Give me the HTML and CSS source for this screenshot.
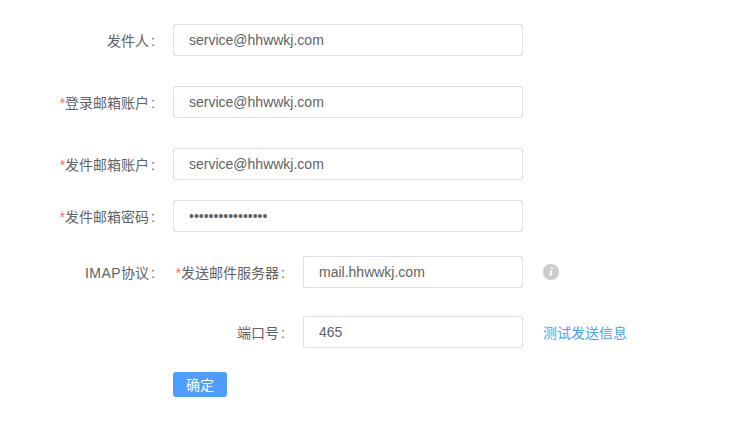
FILE: index.html
```html
<!DOCTYPE html>
<html lang="en">

<head>
    <meta charset="UTF-8">
    <title>邮箱设置</title>
    <link rel="stylesheet" href="styles.css">
</head>

<body>
    <form class="form">
        <div class="row row-sender">
            <label class="label">发件人<span class="colon">:</span></label>
            <input class="input" type="text" value="service@hhwwkj.com">
        </div>
        <div class="row row-login">
            <label class="label"><span class="star">*</span>登录邮箱账户<span class="colon">:</span></label>
            <input class="input" type="text" value="service@hhwwkj.com">
        </div>
        <div class="row row-account">
            <label class="label"><span class="star">*</span>发件邮箱账户<span class="colon">:</span></label>
            <input class="input" type="text" value="service@hhwwkj.com">
        </div>
        <div class="row row-password">
            <label class="label"><span class="star">*</span>发件邮箱密码<span class="colon">:</span></label>
            <input class="input" type="password" value="1234567890123456">
        </div>
        <div class="row row-server">
            <label class="label"><span class="latin">IMAP</span>协议<span class="colon">:</span></label>
            <label class="label label-inner"><span class="star">*</span>发送邮件服务器<span class="colon">:</span></label>
            <input class="input input-short" type="text" value="mail.hhwwkj.com">
            <span class="info">i</span>
        </div>
        <div class="row row-port">
            <span class="label"></span>
            <label class="label label-inner">端口号<span class="colon">:</span></label>
            <input class="input input-short" type="text" value="465">
            <a class="test-link" href="#">测试发送信息</a>
        </div>
        <div class="row row-submit">
            <span class="label"></span>
            <button class="btn" type="button">确定</button>
        </div>
    </form>
</body>

</html>
```

FILE: styles.css
```css
* {
    padding: 0;
    margin: 0;
    box-sizing: border-box;
}

body {
    background-color: #fff;
    font-family: "Liberation Sans", "Noto Sans CJK SC", sans-serif;
    font-size: 14px;
    color: #606266;
}

.form {
    padding-top: 24px;
}

.row {
    display: flex;
    align-items: center;
    height: 32px;
}

.row-login,
.row-account {
    margin-top: 30px;
}

.row-password {
    margin-top: 20px;
}

.row-server {
    margin-top: 24px;
}

.row-port {
    margin-top: 28px;
}

.row-submit {
    margin-top: 24px;
    height: 25px;
}

.label {
    flex: none;
    width: 173px;
    padding-right: 18px;
    text-align: right;
    white-space: nowrap;
}

.label-inner {
    width: 130px;
}

.colon {
    margin-left: 2px;
}

.latin {
    letter-spacing: 0.5px;
}

.star {
    color: #f56c6c;
}

.input {
    width: 350px;
    height: 32px;
    padding: 0 15px;
    border: 1px solid #dcdfe6;
    border-radius: 2px;
    outline: none;
    background-color: #fff;
    font-family: inherit;
    font-size: 14px;
    color: #606266;
}

.input-short {
    width: 220px;
}

.info {
    width: 16px;
    height: 16px;
    margin-left: 20px;
    border-radius: 50%;
    background-color: #ccc;
    font-family: "Liberation Serif", serif;
    font-size: 12px;
    font-style: italic;
    font-weight: bold;
    line-height: 16px;
    text-align: center;
    color: #fff;
}

.test-link {
    margin-left: 20px;
    color: #4c9dff;
    text-decoration: none;
}

.btn {
    width: 54px;
    height: 25px;
    padding-bottom: 2px;
    border: none;
    border-radius: 3px;
    background-color: #4c9dff;
    font-family: inherit;
    font-size: 14px;
    color: #fff;
}
```
